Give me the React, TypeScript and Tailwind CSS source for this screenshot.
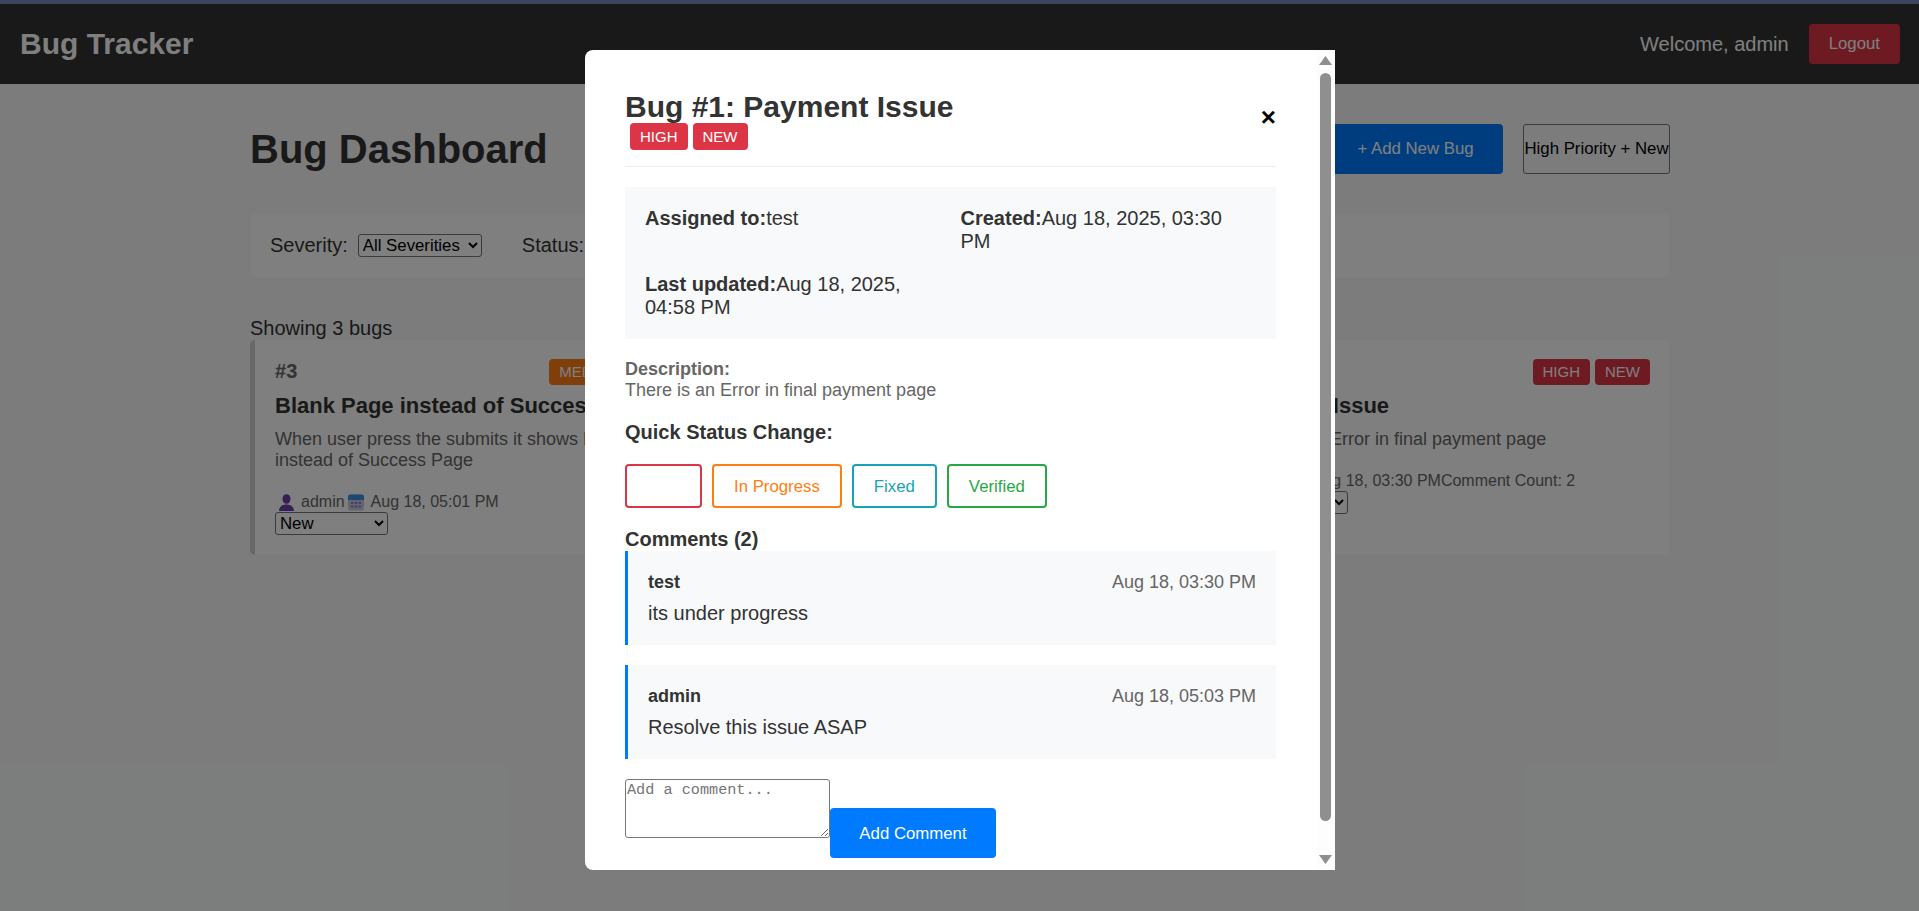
import React from "react";

type Bug = {
  id: number;
  title: string;
  description: string;
  severity: string;
  severityClass: string;
  assignee: string;
  date: string;
  comments?: number;
};

const bugs: Bug[] = [
  {
    id: 3,
    title: "Blank Page instead of Success Page",
    description: "When user press the submits it shows Blank Page instead of Success Page",
    severity: "MEDIUM",
    severityClass: "bg-[#fd7e14]",
    assignee: "admin",
    date: "Aug 18, 05:01 PM",
  },
  {
    id: 1,
    title: "Payment Issue",
    description: "There is an Error in final payment page",
    severity: "HIGH",
    severityClass: "bg-[#dc3545]",
    assignee: "test",
    date: "Aug 18, 03:30 PM",
    comments: 2,
  },
];

const comments = [
  { author: "test", date: "Aug 18, 03:30 PM", text: "its under progress" },
  { author: "admin", date: "Aug 18, 05:03 PM", text: "Resolve this issue ASAP" },
];

const UserIcon = () => (
  <svg width="17" height="17" viewBox="0 0 17 17" className="shrink-0">
    <ellipse cx="8.500" cy="5" rx="4" ry="4.800" fill="#6a3fa8" />
    <path d="M1 17c0-4 3-6.500 7.500-6.500S16 13 16 17z" fill="#6a3fa8" />
  </svg>
);

const CalendarIcon = () => (
  <svg width="16" height="17" viewBox="0 0 16 17" className="shrink-0">
    <rect x="0" y="0.500" width="16" height="16" rx="2.500" fill="#c9c8e0" />
    <path d="M0 6V3a2.500 2.500 0 0 1 2.500-2.500h11A2.500 2.500 0 0 1 16 3v3z" fill="#3f8fe0" />
    <g fill="#8f84c4">
      <rect x="3" y="8" width="2.500" height="2" />
      <rect x="6.800" y="8" width="2.500" height="2" />
      <rect x="10.500" y="8" width="2.500" height="2" />
      <rect x="3" y="11.500" width="2.500" height="2" />
      <rect x="6.800" y="11.500" width="2.500" height="2" />
      <rect x="10.500" y="11.500" width="2.500" height="2" />
    </g>
  </svg>
);

const BugCard = ({ bug }: { bug: Bug }) => (
  <div className="rounded-[5px] border-l-[5px] border-[#d0d0d0] bg-white p-5">
    <div className="flex h-[26px] items-start justify-between">
      <span className="text-[20px] font-bold text-[#666]">#{bug.id}</span>
      <div className="-mt-px flex gap-[5px]">
        <span className={`rounded-[4px] px-2.5 py-1 text-[15px] leading-[18px] text-white ${bug.severityClass}`}>
          {bug.severity}
        </span>
        <span className="rounded-[4px] bg-[#dc3545] px-2.5 py-1 text-[15px] leading-[18px] text-white">NEW</span>
      </div>
    </div>
    <h3 className="mt-[7px] text-[22px] font-bold leading-[25px] text-[#333]">{bug.title}</h3>
    <p className="mt-[11px] text-[18px] leading-[21px] text-[#666]">{bug.description}</p>
    <div className="mt-[22px] flex h-[19px] items-center text-[16px] text-[#666]">
      <span className="ml-[3px] mr-[6px] flex"><UserIcon /></span>
      <span>{bug.assignee}</span>
      <span className="ml-[3px] mr-[7px] flex"><CalendarIcon /></span>
      <span>{bug.date}</span>
      {bug.comments ? <span>Comment Count: {bug.comments}</span> : null}
    </div>
    <select className="block h-[23px] w-[113px] rounded-[3px] border border-[#767676] bg-white text-[16.8px] leading-none text-black">
      <option>New</option>
    </select>
  </div>
);

const StatusButton = ({ label, className }: { label: string; className: string }) => (
  <button className={`h-[44px] rounded-[4px] border-2 bg-white px-5 text-[16.8px] ${className}`}>{label}</button>
);

export default function App() {
  return (
    <div className="relative h-[911px] overflow-hidden bg-[#f8f9fa] font-['Liberation_Sans',Arial,sans-serif] text-[20px] leading-[1.15] text-[#333]">
      <nav className="mt-1 flex h-[80px] items-center justify-between bg-[#333] pr-[19px] pl-5 text-white">
        <h1 className="text-[30px] font-bold">Bug Tracker</h1>
        <div className="flex items-center gap-5">
          <span>Welcome, admin</span>
          <button className="h-10 rounded-[4px] bg-[#dc3545] px-5 text-[16.8px] text-white">Logout</button>
        </div>
      </nav>

      <main className="ml-[250px] w-[1420px]">
        <div className="mt-10 flex h-[50px] items-center justify-between">
          <h2 className="text-[40px] font-bold">Bug Dashboard</h2>
          <div className="flex gap-5">
            <button className="h-[50px] w-[175px] rounded-[4px] bg-[#007bff] text-[16.8px] text-white">+ Add New Bug</button>
            <button className="h-[50px] w-[147px] rounded-[3px] border border-[#767676] text-[16.8px] whitespace-nowrap text-black">
              High Priority + New
            </button>
          </div>
        </div>

        <div className="mt-10 flex h-[63px] items-center rounded-[5px] bg-white px-5">
          <label>Severity:</label>
          <select className="ml-[10px] h-[23px] w-[124px] rounded-[3px] border border-[#767676] text-[16.8px] leading-none text-black">
            <option>All Severities</option>
          </select>
          <label className="ml-10">Status:</label>
          <select className="ml-[10px] h-[23px] w-[124px] rounded-[3px] border border-[#767676] text-[16.8px] leading-none text-black">
            <option>All Statuses</option>
          </select>
        </div>

        <p className="mt-[40px]">Showing 3 bugs</p>

        <div className="grid grid-cols-3 gap-5">
          <BugCard bug={bugs[0]} />
          <div className="rounded-[5px] bg-white" />
          <BugCard bug={bugs[1]} />
        </div>
      </main>

      <div className="absolute inset-0 bg-black/50 pt-[50px] pl-[585px]">
        <div className="relative h-[820px] w-[750px] overflow-hidden rounded-l-lg bg-white pt-10 pl-10">
          <div className="w-[651px]">
            <div className="flex h-[77px] items-start justify-between border-b border-[#eee]">
              <div>
                <h2 className="text-[30px] leading-[33px] font-bold">Bug #1: Payment Issue</h2>
                <div className="ml-[5px] flex gap-[5px]">
                  <span className="rounded-[4px] bg-[#dc3545] px-2.5 py-1 text-[15px] leading-[19px] text-white">HIGH</span>
                  <span className="rounded-[4px] bg-[#dc3545] px-2.5 py-1 text-[15px] leading-[19px] text-white">NEW</span>
                </div>
              </div>
              <button className="mt-3 text-[26px] leading-[30px] font-bold text-black">×</button>
            </div>

            <div className="mt-5 grid grid-cols-2 gap-5 bg-[#f8f9fa] p-5">
              <div><strong>Assigned to:</strong>test</div>
              <div><strong>Created:</strong>Aug 18, 2025, 03:30 PM</div>
              <div><strong>Last updated:</strong>Aug 18, 2025, 04:58 PM</div>
            </div>

            <div className="mt-5 text-[18px] text-[#666]">
              <strong className="block">Description:</strong>
              There is an Error in final payment page
            </div>

            <h4 className="mt-[21px] font-bold">Quick Status Change:</h4>
            <div className="mt-5 flex gap-2.5">
              <StatusButton label="" className="w-[77px] border-[#dc3545]" />
              <StatusButton label="In Progress" className="border-[#fd7e14] text-[#fd7e14]" />
              <StatusButton label="Fixed" className="border-[#17a2b8] text-[#17a2b8]" />
              <StatusButton label="Verified" className="border-[#28a745] text-[#28a745]" />
            </div>

            <h4 className="mt-5 font-bold">Comments (2)</h4>
            <div className="flex flex-col gap-5">
              {comments.map((c) => (
                <div key={c.author} className="h-[94px] border-l-[3px] border-[#007bff] bg-[#f8f9fa] px-5 pt-5">
                  <div className="flex h-[21px] items-center justify-between">
                    <strong className="text-[18px]">{c.author}</strong>
                    <span className="text-[18px] text-[#666]">{c.date}</span>
                  </div>
                  <p className="mt-[10px]">{c.text}</p>
                </div>
              ))}
            </div>

            <div className="mt-5 flex items-start">
              <textarea
                placeholder="Add a comment..."
                className="h-[59px] w-[205px] rounded-[3px] border border-[#767676] px-px py-[2px] font-['Liberation_Mono',monospace] text-[15.2px] leading-[17px] placeholder:text-[#757575]"
              />
              <button className="mt-[29px] h-[50px] w-[166px] rounded-[4px] bg-[#007bff] text-[16.8px] text-white">Add Comment</button>
            </div>
          </div>

          {/* fake scrollbar, the modal is scrolled to the top */}
          <div className="absolute top-0 right-0 bottom-0 w-[18px] bg-[#fdfdfd]">
            <svg width="13" height="9" viewBox="0 0 13 9" className="absolute top-[6px] left-[2px]">
              <polygon points="6.500,0 13,9 0,9" fill="#8f8f8f" />
            </svg>
            <div className="absolute top-[23px] left-[3px] h-[748px] w-[11px] rounded-full bg-[#8f8f8f]" />
            <svg width="13" height="9" viewBox="0 0 13 9" className="absolute bottom-[6px] left-[2px]">
              <polygon points="0,0 13,0 6.500,9" fill="#8f8f8f" />
            </svg>
          </div>
        </div>
      </div>

      <div className="absolute top-0 right-0 left-0 h-1 bg-[#3a4660]" />
    </div>
  );
}
